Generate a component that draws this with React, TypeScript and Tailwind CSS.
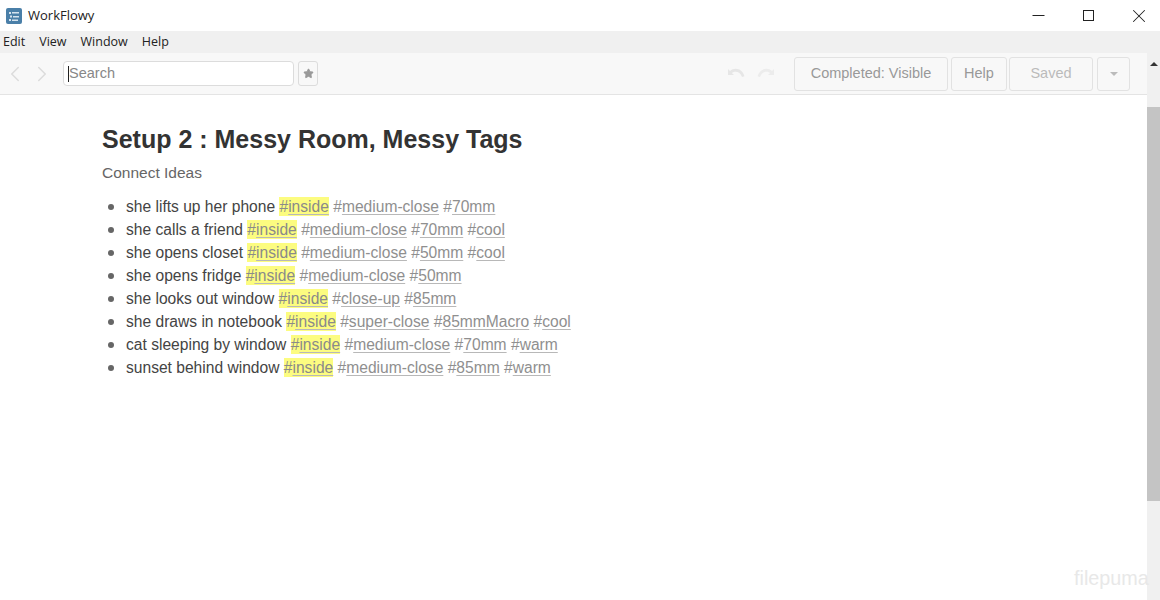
import React from "react";
import { ChevronLeft, ChevronRight, Minus, X, Star } from "lucide-react";

type Tag = { label: string; hl?: boolean };

const rows: { text: string; tags: string[] }[] = [
  { text: "she lifts up her phone", tags: ["medium-close", "70mm"] },
  { text: "she calls a friend", tags: ["medium-close", "70mm", "cool"] },
  { text: "she opens closet", tags: ["medium-close", "50mm", "cool"] },
  { text: "she opens fridge", tags: ["medium-close", "50mm"] },
  { text: "she looks out window", tags: ["close-up", "85mm"] },
  { text: "she draws in notebook", tags: ["super-close", "85mmMacro", "cool"] },
  { text: "cat sleeping by window", tags: ["medium-close", "70mm", "warm"] },
  { text: "sunset behind window", tags: ["medium-close", "85mm", "warm"] },
];

function HashTag({ label, hl }: Tag) {
  return (
    <span className={hl ? "bg-[#fcfc80] py-[1px] text-[#8a8a8a]" : "text-[#8f8f8f]"}>
      #<span className="underline decoration-[#b8b8b8] underline-offset-2">{label}</span>
    </span>
  );
}

function ToolButton({ children, className }: { children: React.ReactNode; className: string }) {
  return (
    <div className={`h-[34px] flex items-center justify-center rounded-[3px] border border-[#e2e2e2] bg-[#f8f8f8] text-[14.5px] ${className}`}>
      {children}
    </div>
  );
}

function UndoArrow({ flip }: { flip?: boolean }) {
  return (
    <svg width="17" height="12" viewBox="0 0 17 12" className={flip ? "-scale-x-100" : ""} fill={flip ? "#ececec" : "#e6e6e6"}>
      <path d="M0 1v6h6L3.8 5C5 4 6.200 3.700 7.500 3.700c3 0 5.300 1.800 6.500 5.300l2.500-.8C15 3.500 11.800.8 7.500.8 5.500.8 3.600 1.500 2 3L0 1z" />
    </svg>
  );
}

export default function App() {
  return (
    <div className="relative h-[600px] w-[1160px] overflow-hidden bg-white flex flex-col font-['Liberation_Sans',sans-serif]">
      {/* title bar */}
      <div className="h-[31px] flex items-center bg-white pl-[6px]">
        <svg width="16" height="16" viewBox="0 0 16 16">
          <rect width="16" height="16" rx="2" fill="#4a7fa8" />
          <rect x="3" y="4" width="2" height="2" fill="#d5e3ee" />
          <rect x="6" y="4" width="7" height="1.5" fill="#d5e3ee" />
          <rect x="4" y="7.500" width="2" height="2" fill="#d5e3ee" />
          <rect x="7" y="8" width="6" height="1.5" fill="#d5e3ee" />
          <rect x="3" y="11" width="2" height="2" fill="#d5e3ee" />
          <rect x="6" y="11.500" width="6" height="1.5" fill="#d5e3ee" />
        </svg>
        <span className="ml-[6px] text-[13px] text-[#222] font-['Open_Sans',sans-serif]">WorkFlowy</span>
        <div className="ml-auto flex items-center gap-[25px] pr-[9px] text-[#222]">
          <div className="w-[25px] flex justify-center"><Minus size={19} strokeWidth={1.5} /></div>
          <div className="w-[25px] flex justify-center"><div className="size-[11px] border border-[#222]" /></div>
          <div className="w-[25px] flex justify-center"><X size={22} strokeWidth={1.1} /></div>
        </div>
      </div>

      {/* menu bar */}
      <div className="h-[22px] flex items-center gap-[14px] bg-[#f0f0f0] pl-[3px] pt-[1px] text-[12.5px] text-[#222] font-['Open_Sans',sans-serif]">
        <span>Edit</span>
        <span>View</span>
        <span>Window</span>
        <span>Help</span>
      </div>

      <div className="flex flex-1 min-h-0">
        <div className="flex-1 flex flex-col min-w-0">
          {/* toolbar */}
          <div className="h-[42px] flex items-center bg-[#f8f8f8] border-b border-[#e4e4e4] pl-[2px] pr-[17px]">
            <ChevronLeft size={26} strokeWidth={1.4} className="text-[#dcdcdc]" />
            <ChevronRight size={26} strokeWidth={1.4} className="ml-[1px] text-[#dcdcdc]" />
            <div className="ml-[8px] h-[25px] w-[231px] flex items-center rounded-[4px] border border-[#dcdcdc] bg-white pl-[4px] text-[14.5px] text-[#888]">
              <span className="h-[16px] w-px bg-[#222]" />
              Search
            </div>
            <div className="ml-[4px] h-[25px] w-[20px] flex items-center justify-center rounded-[3px] border border-[#dcdcdc] bg-[#f8f8f8]">
              <Star size={11} className="text-[#999] fill-[#999]" />
            </div>
            <div className="ml-auto flex items-center">
              <UndoArrow />
              <div className="ml-[12px]"><UndoArrow flip /></div>
              <ToolButton className="ml-[20px] w-[154px] text-[#999]">Completed: Visible</ToolButton>
              <ToolButton className="ml-[3px] w-[56px] text-[#999]">Help</ToolButton>
              <ToolButton className="ml-[2px] w-[84px] text-[#bbb]">Saved</ToolButton>
              <ToolButton className="ml-[4px] w-[33px]">
                <span className="border-x-[4px] border-t-[4px] border-x-transparent border-t-[#bbb]" />
              </ToolButton>
            </div>
          </div>

          {/* document */}
          <div className="flex-1 pl-[102px] pt-[28px]">
            <h1 className="text-[25px] leading-[32px] font-bold text-[#333]">Setup 2 : Messy Room, Messy Tags</h1>
            <p className="mt-[8px] text-[15.5px] leading-[20px] text-[#666]">Connect Ideas</p>
            <ul className="mt-[12px] flex flex-col">
              {rows.map((row) => (
                <li key={row.text} className="flex items-center h-[23px] text-[15.6px] text-[#444]">
                  <span className="ml-[6px] mr-[12px] size-[6px] rounded-full bg-[#666]" />
                  <span className="whitespace-pre">
                    {row.text} <HashTag label="inside" hl />
                    {row.tags.map((t) => (
                      <span key={t}> <HashTag label={t} /></span>
                    ))}
                  </span>
                </li>
              ))}
            </ul>
          </div>
        </div>

        {/* scrollbar */}
        <div className="w-[13px] flex flex-col items-center bg-[#f0f0f0]">
          <div className="h-[54px] w-full flex justify-center pt-[9px]">
            <span className="h-0 border-x-[4px] border-b-[4px] border-x-transparent border-b-[#333]" />
          </div>
          <div className="h-[394px] w-full bg-[#c4c4c4]" />
        </div>
      </div>

      <span className="absolute left-[1074px] top-[564px] text-[19.8px] text-[#e8e8e8]">filepuma</span>
    </div>
  );
}
